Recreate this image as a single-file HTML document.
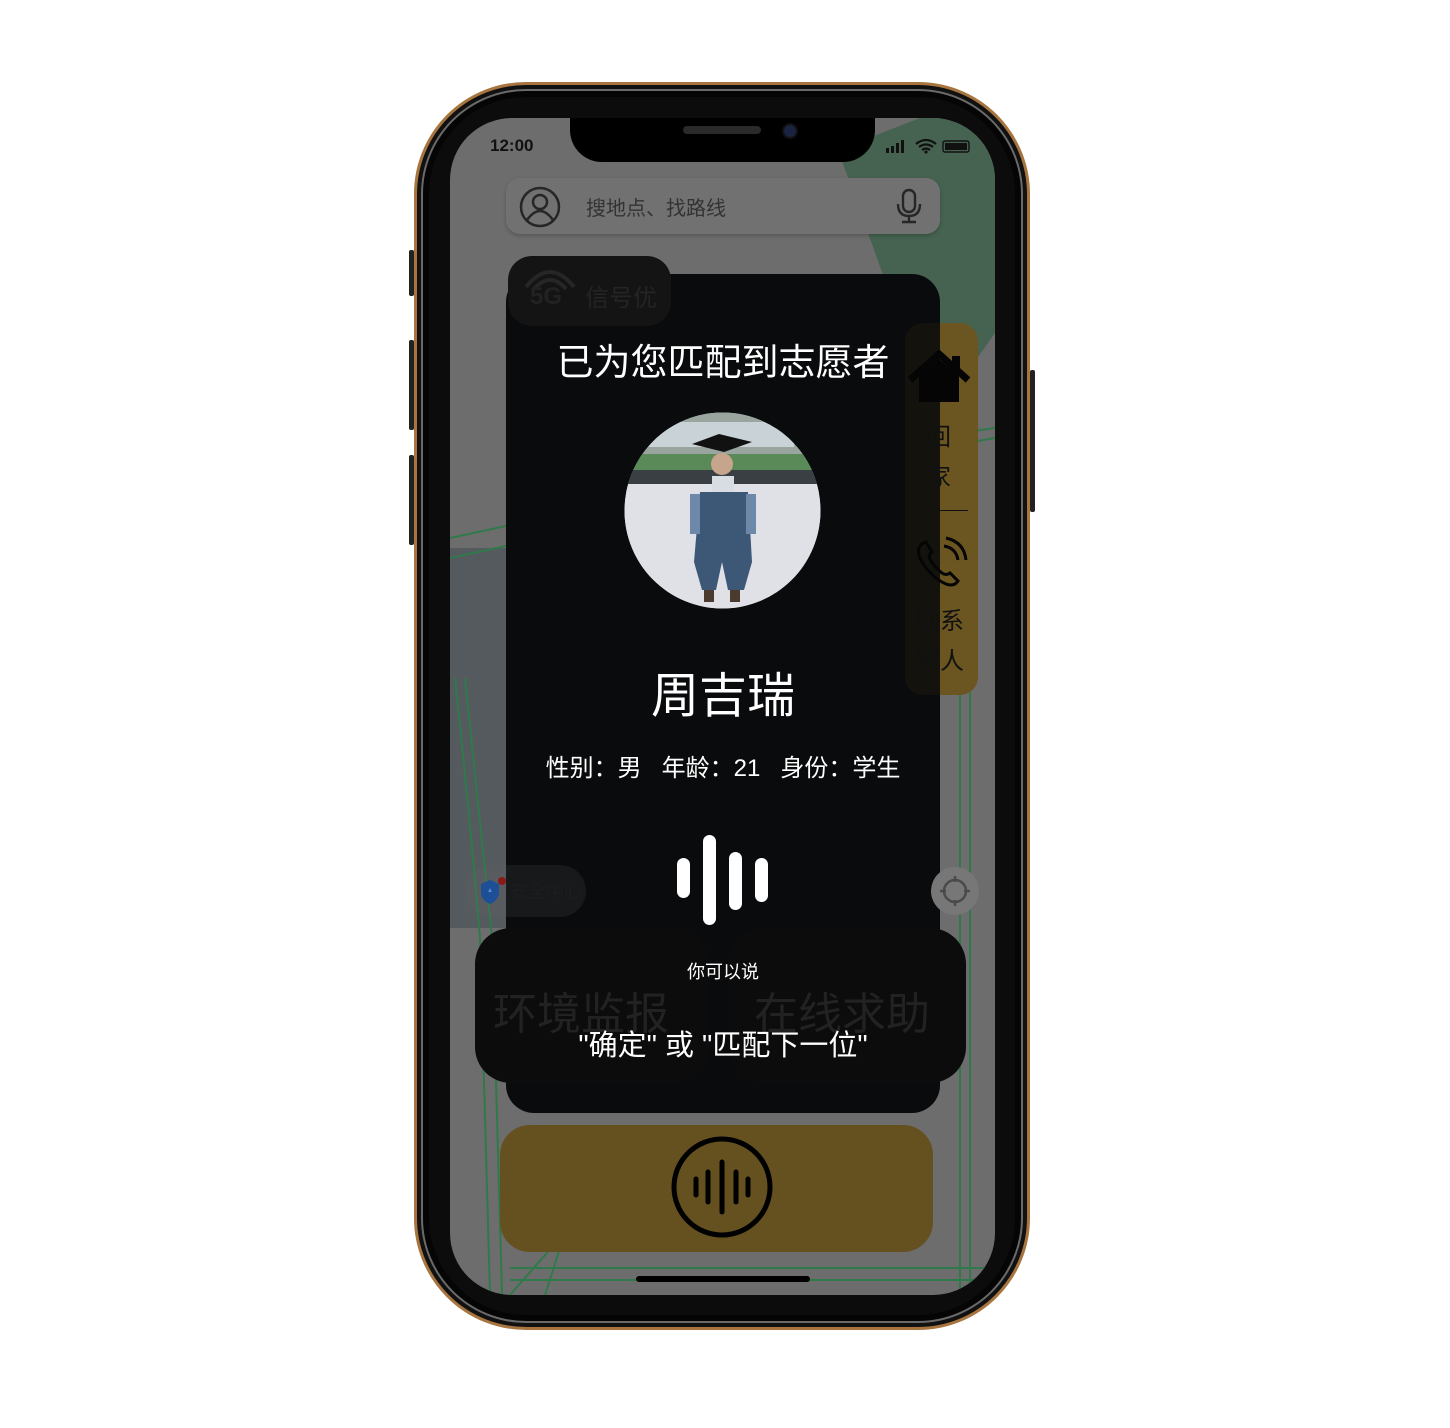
<!DOCTYPE html>
<html><head><meta charset="utf-8">
<style>
*{margin:0;padding:0;box-sizing:border-box}
body{width:1450px;height:1428px;background:#fff;position:relative;overflow:hidden;font-family:"Liberation Sans","Noto Sans CJK SC",sans-serif}
.abs{position:absolute}
.phone{left:414px;top:82px;width:616px;height:1248px;border-radius:112px;background:#0c0c0c;border:3px solid #a8753f;box-shadow:inset 0 0 0 4px #111,inset 0 0 0 6px #6a6a6a,inset 0 0 0 12px #050505}
.screen{left:450px;top:118px;width:545px;height:1177px;border-radius:62px;background:#6d6d6d;overflow:hidden}
.notch{left:120px;top:-2px;width:305px;height:46px;background:#000;border-radius:0 0 32px 32px}
</style></head><body>
<div class="abs phone"></div>
<div class="abs" style="left:409px;top:250px;width:5px;height:46px;background:#222;border-radius:2px"></div>
<div class="abs" style="left:409px;top:340px;width:5px;height:90px;background:#222;border-radius:2px"></div>
<div class="abs" style="left:409px;top:455px;width:5px;height:90px;background:#222;border-radius:2px"></div>
<div class="abs" style="left:1030px;top:370px;width:5px;height:142px;background:#222;border-radius:2px"></div>
<div class="abs screen">
  <svg class="abs" style="left:0;top:0" width="545" height="1177">
    <polygon points="388,32 470,0 545,0 545,215 485,300 445,190" fill="#456350"/>
    <rect x="0" y="430" width="56" height="380" fill="#555a5f"/>
    <path d="M0,420 L140,390 L400,330 L545,310" stroke="#2f7a4a" stroke-width="2" fill="none"/>
    <path d="M0,440 L140,410 L400,345 L545,320" stroke="#2f7a4a" stroke-width="2" fill="none"/>
    <path d="M5,560 Q20,700 30,820 L40,1177" stroke="#2f7a4a" stroke-width="2" fill="none"/>
    <path d="M15,560 Q30,700 42,820 L52,1177" stroke="#2f7a4a" stroke-width="2" fill="none"/>
    <path d="M510,560 L510,1177 M520,560 L520,1177" stroke="#2f7a4a" stroke-width="2" fill="none"/>
    <path d="M60,1150 L545,1150 M60,1162 L545,1162 M60,1177 L110,1120 M95,1177 L110,1130" stroke="#2f7a4a" stroke-width="2" fill="none"/>
  </svg>
  <div class="abs notch"></div>
  <div class="abs" style="left:233px;top:8px;width:78px;height:8px;border-radius:4px;background:#2a2a2a"></div>
  <div class="abs" style="left:334px;top:7px;width:12px;height:12px;border-radius:6px;background:#1a2440;box-shadow:0 0 0 2px #111"></div>
  <div class="abs" style="left:40px;top:18px;font-size:17px;font-weight:bold;color:#111">12:00</div>
  <svg class="abs" style="left:436px;top:20px" width="90" height="18">
    <rect x="0" y="10" width="3" height="5" fill="#111"/><rect x="5" y="8" width="3" height="7" fill="#111"/><rect x="10" y="5" width="3" height="10" fill="#111"/><rect x="15" y="2" width="3" height="13" fill="#111"/>
    <path d="M30,6 q10,-8 20,0 M33,9 q7,-5 14,0 M36,12 q4,-3 8,0" stroke="#111" stroke-width="2.2" fill="none"/><circle cx="40" cy="14" r="1.6" fill="#111"/>
    <rect x="57" y="3" width="26" height="11" rx="2" fill="none" stroke="#111" stroke-width="1.4"/><rect x="59" y="5" width="22" height="7" fill="#111"/>
  </svg>
  <div class="abs" style="left:56px;top:60px;width:434px;height:56px;border-radius:14px;background:#717171;box-shadow:0 2px 4px rgba(0,0,0,.2)"></div>
  <svg class="abs" style="left:68px;top:67px" width="44" height="44"><circle cx="22" cy="22" r="19" stroke="#262626" stroke-width="2.5" fill="none"/><circle cx="22" cy="17" r="7" stroke="#262626" stroke-width="2.5" fill="none"/><path d="M9,35 q13,-18 26,0" stroke="#262626" stroke-width="2.5" fill="none"/></svg>
  <div class="abs" style="left:136px;top:74px;font-size:20px;color:#333">搜地点、找路线</div>
  <svg class="abs" style="left:444px;top:70px" width="30" height="38"><rect x="9" y="2" width="12" height="22" rx="6" stroke="#262626" stroke-width="2.4" fill="none"/><path d="M4,16 q0,12 11,12 q11,0 11,-12 M15,28 v5 M8,34 h14" stroke="#262626" stroke-width="2.4" fill="none"/></svg>
  <div class="abs" style="left:455px;top:205px;width:73px;height:372px;border-radius:18px;background:#6b5520"></div>
  <div class="abs" style="left:56px;top:156px;width:434px;height:839px;border-radius:28px;background:#0a0b0c"></div>
  <div class="abs" style="left:455px;top:205px;width:35px;height:372px;border-radius:18px 0 0 18px;background:rgba(107,85,32,0.1)"></div>
  <svg class="abs" style="left:456px;top:228px" width="66" height="60"><path d="M4,34 L33,8 L62,34" stroke="#050505" stroke-width="7" fill="none"/><rect x="46" y="10" width="8" height="16" fill="#050505"/><path d="M13,30 L33,13 L53,30 V56 H13Z" fill="#050505"/></svg>
  <div class="abs" style="left:477px;top:300px;font-size:24px;color:#111;line-height:40px;width:30px">回<br>家</div>
  <div class="abs" style="left:462px;top:392px;width:56px;height:1px;background:#111"></div>
  <svg class="abs" style="left:464px;top:418px" width="56" height="54"><path d="M6,10 q-4,6 2,16 q10,16 24,22 q8,3 12,-3 l-8,-8 q-4,3 -8,0 q-8,-6 -12,-14 q-2,-4 2,-7 l-6,-10 q-4,1 -6,4z" stroke="#050505" stroke-width="3" fill="none"/><path d="M30,10 q12,2 14,14 M32,2 q18,4 20,22" stroke="#050505" stroke-width="3" fill="none"/></svg>
  <div class="abs" style="left:466px;top:484px;font-size:24px;color:#111;line-height:40px;width:60px">联系<br>家人</div>
  <div class="abs" style="left:58px;top:138px;width:163px;height:70px;border-radius:24px;background:#141414"></div>
  <svg class="abs" style="left:70px;top:143px" width="60" height="30"><path d="M6,26 q24,-30 48,0 M14,28 q16,-18 32,0" stroke="#262626" stroke-width="4" fill="none"/></svg>
  <div class="abs" style="left:80px;top:165px;font-size:24px;font-weight:bold;color:#222">5G</div>
  <div class="abs" style="left:135px;top:160px;font-size:24px;color:#242424">信号优</div>
  <div class="abs" style="left:16px;top:747px;width:120px;height:52px;border-radius:26px;background:rgba(110,110,110,0.15)"></div>
  <svg class="abs" style="left:28px;top:758px" width="30" height="30"><path d="M12,4 l9,4 v8 q0,8 -9,12 q-9,-4 -9,-12 v-8z" fill="#1d4f96"/><path d="M12,12 l2,4 h-4z" fill="#5d86c6"/><circle cx="24" cy="5" r="4" fill="#8a1a1a"/></svg>
  <div class="abs" style="left:60px;top:760px;font-size:18px;color:#1d1d1d">安全中心</div>
  <div class="abs" style="left:481px;top:749px;width:48px;height:48px;border-radius:24px;background:#777"></div>
  <svg class="abs" style="left:481px;top:749px" width="48" height="48"><circle cx="24" cy="24" r="11" stroke="#4a4a4a" stroke-width="2.5" fill="none"/><path d="M24,9 v6 M24,33 v6 M9,24 h6 M33,24 h6" stroke="#4a4a4a" stroke-width="2.5"/></svg>
  <div class="abs" style="left:25px;top:810px;width:235px;height:155px;border-radius:36px;background:#0c0c0c"></div>
  <div class="abs" style="left:278px;top:810px;width:238px;height:155px;border-radius:36px;background:#0c0c0c"></div>
  <div class="abs" style="left:43px;top:860px;font-size:44px;color:#222">环境监报</div>
  <div class="abs" style="left:304px;top:860px;font-size:44px;color:#222">在线求助</div>
  <div class="abs" style="left:56px;top:214px;width:434px;text-align:center;font-size:37px;color:#fff">已为您匹配到志愿者</div>
  <svg class="abs" style="left:174px;top:294px" width="197" height="197">
    <defs><clipPath id="c"><circle cx="98.5" cy="98.5" r="98"/></clipPath></defs>
    <g clip-path="url(#c)">
      <rect width="197" height="197" fill="#d9dde2"/>
      <rect y="0" width="197" height="45" fill="#9aa5a0"/>
      <rect x="20" y="10" width="150" height="25" fill="#c9d2d6"/>
      <rect y="42" width="197" height="20" fill="#5a8a58"/>
      <rect y="58" width="197" height="14" fill="#3a3f44"/>
      <rect y="72" width="197" height="125" fill="#dfe1e6"/>
      <path d="M68,32 L95,22 L128,30 L100,40Z" fill="#111"/>
      <circle cx="98" cy="52" r="11" fill="#c7a58c"/>
      <rect x="88" y="64" width="22" height="20" fill="#d8dde4"/>
      <path d="M76,80 L124,80 L128,150 L120,178 L104,178 L98,150 L92,178 L78,178 L70,150Z" fill="#3d5877"/>
      <rect x="66" y="82" width="10" height="40" fill="#6d88a8"/>
      <rect x="122" y="82" width="10" height="40" fill="#6d88a8"/>
      <rect x="80" y="178" width="10" height="12" fill="#4b3a2e"/>
      <rect x="106" y="178" width="10" height="12" fill="#4b3a2e"/>
    </g>
  </svg>
  <div class="abs" style="left:56px;top:538px;width:434px;text-align:center;font-size:48px;color:#fff">周吉瑞</div>
  <div class="abs" style="left:56px;top:630px;width:434px;text-align:center;font-size:24px;color:#fff;white-space:pre">性别：男   年龄：21   身份：学生</div>
  <div class="abs" style="left:227px;top:740px;width:13px;height:40px;border-radius:7px;background:#fff"></div>
  <div class="abs" style="left:253px;top:717px;width:13px;height:90px;border-radius:7px;background:#fff"></div>
  <div class="abs" style="left:279px;top:734px;width:13px;height:58px;border-radius:7px;background:#fff"></div>
  <div class="abs" style="left:305px;top:740px;width:13px;height:44px;border-radius:7px;background:#fff"></div>
  <div class="abs" style="left:56px;top:840px;width:434px;text-align:center;font-size:18px;color:#fff">你可以说</div>
  <div class="abs" style="left:56px;top:904px;width:434px;text-align:center;font-size:29px;color:#fff">"确定" 或 "匹配下一位"</div>
  <div class="abs" style="left:50px;top:1007px;width:433px;height:127px;border-radius:30px;background:#65501f"></div>
  <svg class="abs" style="left:219px;top:1016px" width="106" height="106"><circle cx="53" cy="53" r="48" stroke="#000" stroke-width="5" fill="none"/>
    <g stroke="#000" stroke-width="5" stroke-linecap="round"><path d="M27,45 v16 M39,38 v30 M53,28 v50 M67,38 v30 M79,45 v16"/></g></svg>
  <div class="abs" style="left:186px;top:1158px;width:174px;height:6px;border-radius:3px;background:#000"></div>
</div>
</body></html>
